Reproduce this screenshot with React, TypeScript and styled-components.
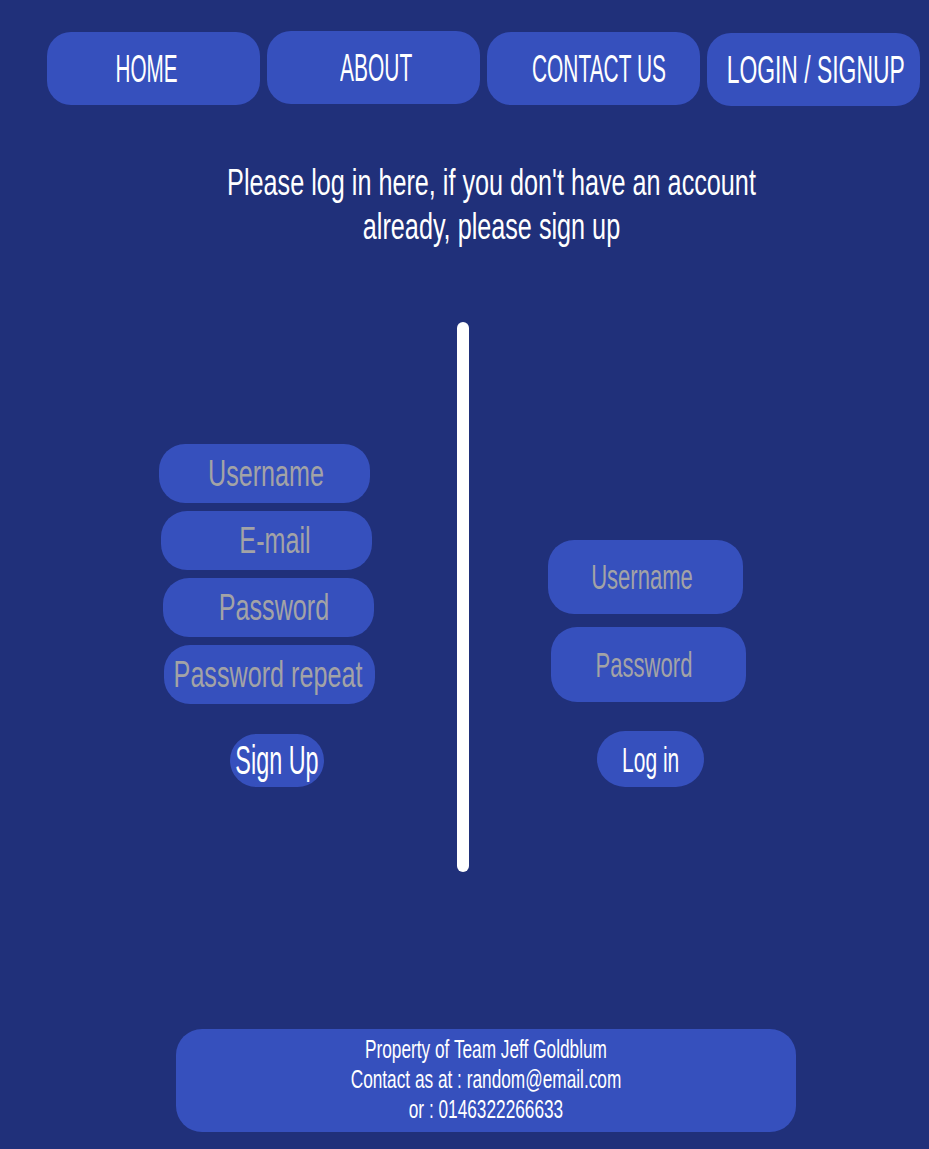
import React from "react";
import styled, { createGlobalStyle } from "styled-components";

const BG = "#20307a";
const PANEL = "#3650bd";
const FONT = `"Liberation Sans", Arial, sans-serif`;

const Global = createGlobalStyle`
  html, body {
    margin: 0;
    padding: 0;
    background: ${BG};
  }
  * { box-sizing: border-box; }
`;

const Page = styled.div`
  min-height: 1149px;
  background: ${BG};
  padding-top: 32px;
  font-family: ${FONT};
  color: #ffffff;
`;

const Squeeze = styled.span<{ $x: number; $size: number; $block?: boolean }>`
  display: ${(p) => (p.$block ? "block" : "inline-block")};
  white-space: nowrap;
  font-size: ${(p) => p.$size}px;
  transform: scaleX(${(p) => p.$x});
  transform-origin: center;
  flex-shrink: 0;
`;

const Nav = styled.nav`
  display: flex;
  align-items: flex-start;
  gap: 7px;
  padding-left: 47px;
`;

const NavButton = styled.a<{ $dy: number; $text: number }>`
  width: 213px;
  height: 73px;
  margin-top: ${(p) => p.$dy}px;
  padding-left: ${(p) => Math.max(0, p.$text * 2)}px;
  padding-right: ${(p) => Math.max(0, -p.$text * 2)}px;
  border-radius: 24px;
  background: ${PANEL};
  color: #ffffff;
  text-decoration: none;
  display: flex;
  align-items: center;
  justify-content: center;
  line-height: 1;
`;

const Heading = styled.h1`
  margin: 55px 0 0;
  padding-left: 54px;
  text-align: center;
  font-weight: normal;
  line-height: 44px;
  color: #ffffff;
`;

const Row = styled.section`
  display: flex;
  align-items: flex-end;
  margin-top: 73px;
  padding-left: 147px;
`;

const Column = styled.form<{ $gap: number }>`
  width: 240px;
  display: flex;
  flex-direction: column;
  align-items: center;
  gap: ${(p) => p.$gap}px;
  padding-bottom: 85px;
`;

const Divider = styled.div`
  width: 12px;
  height: 550px;
  margin-left: 70px;
  margin-right: 57px;
  background: #ffffff;
  border-radius: 6px;
  flex-shrink: 0;
`;

const Field = styled.label<{ $w: number; $h: number; $shift: number; $text: number }>`
  width: ${(p) => p.$w}px;
  height: ${(p) => p.$h}px;
  margin-left: ${(p) => p.$shift * 2}px;
  padding-left: ${(p) => Math.max(0, p.$text * 2)}px;
  padding-right: ${(p) => Math.max(0, -p.$text * 2)}px;
  border-radius: 26px;
  background: ${PANEL};
  display: flex;
  align-items: center;
  justify-content: center;
  overflow: hidden;
`;

const Input = styled.input<{ $x: number; $size: number }>`
  flex-shrink: 0;
  width: 330px;
  background: transparent;
  border: none;
  outline: none;
  padding: 0;
  margin: 0;
  font-family: ${FONT};
  font-size: ${(p) => p.$size}px;
  color: #ffffff;
  text-align: center;
  transform: scaleX(${(p) => p.$x});
  transform-origin: center;
  &::placeholder {
    color: #a3a3a6;
    opacity: 1;
  }
`;

const Submit = styled.button<{ $w: number; $h: number; $shift: number; $top: number }>`
  width: ${(p) => p.$w}px;
  height: ${(p) => p.$h}px;
  margin-left: ${(p) => p.$shift * 2}px;
  margin-top: ${(p) => p.$top}px;
  border: none;
  border-radius: ${(p) => p.$h / 2}px;
  background: ${PANEL};
  color: #ffffff;
  font-family: ${FONT};
  padding: 0;
  display: flex;
  align-items: center;
  justify-content: center;
  line-height: 1;
  cursor: pointer;
`;

const Footer = styled.footer`
  width: 620px;
  height: 103px;
  margin: 157px 0 0 176px;
  padding: 5px 0 8px;
  border-radius: 26px;
  background: ${PANEL};
  text-align: center;
  line-height: 30px;
  color: #ffffff;
`;

const navItems = [
  { label: "HOME", x: 0.53, dy: 1, text: -7 },
  { label: "ABOUT", x: 0.537, dy: 0, text: 2.5 },
  { label: "CONTACT US", x: 0.536, dy: 1, text: 5 },
  { label: "LOGIN / SIGNUP", x: 0.587, dy: 2, text: 2.5 },
];

const signupFields = [
  { ph: "Username", shift: -2.5, text: 1 },
  { ph: "E-mail", shift: -0.5, text: 8.5 },
  { ph: "Password", shift: 1.5, text: 5 },
  { ph: "Password repeat", shift: 2.5, text: -1.5 },
];

const loginFields = [
  { ph: "Username", shift: -0.5, text: -4, h: 74 },
  { ph: "Password", shift: 2.5, text: -4.5, h: 75 },
];

export default function App() {
  return (
    <Page>
      <Global />
      <Nav>
        {navItems.map((n) => (
          <NavButton key={n.label} href="#" $dy={n.dy - 1} $text={n.text}>
            <Squeeze $x={n.x} $size={39}>
              {n.label}
            </Squeeze>
          </NavButton>
        ))}
      </Nav>

      <Heading>
        <Squeeze $x={0.7} $size={36} $block>
          Please log in here, if you don't have an account
          <br />
          already, please sign up
        </Squeeze>
      </Heading>

      <Row>
        <Column $gap={8} onSubmit={(e) => e.preventDefault()}>
          {signupFields.map((f) => (
            <Field key={f.ph} $w={211} $h={59} $shift={f.shift} $text={f.text}>
              <Input placeholder={f.ph} $x={0.68} $size={37} type="text" />
            </Field>
          ))}
          <Submit type="submit" $w={94} $h={53} $shift={10} $top={22}>
            <Squeeze $x={0.57} $size={41}>
              Sign Up
            </Squeeze>
          </Submit>
        </Column>

        <Divider />

        <Column $gap={13} onSubmit={(e) => e.preventDefault()}>
          {loginFields.map((f) => (
            <Field key={f.ph} $w={195} $h={f.h} $shift={f.shift} $text={f.text}>
              <Input placeholder={f.ph} $x={0.63} $size={35} type="text" />
            </Field>
          ))}
          <Submit type="submit" $w={107} $h={56} $shift={4.5} $top={16}>
            <Squeeze $x={0.6} $size={35}>
              Log in
            </Squeeze>
          </Submit>
        </Column>
      </Row>

      <Footer>
        <Squeeze $x={0.69} $size={25} $block>
          Property of Team Jeff Goldblum
          <br />
          Contact as at : random@email.com
          <br />
          or : 0146322266633
        </Squeeze>
      </Footer>
    </Page>
  );
}
